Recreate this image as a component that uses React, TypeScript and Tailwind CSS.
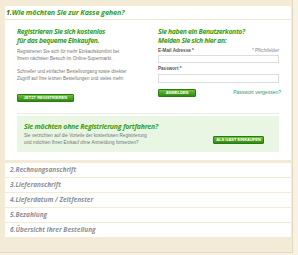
import React from "react";

const steps = [
  "2.Rechnungsanschrift",
  "3.Lieferanschrift",
  "4.Lieferdatum / Zeitfenster",
  "5.Bezahlung",
  "6.Übersicht Ihrer Bestellung",
];

function GreenButton({ label, className = "" }: { label: string; className?: string }) {
  return (
    <button
      className={`h-[8px] rounded-[1px] bg-gradient-to-b from-[#6cc43a] to-[#2f8a12] border border-[#2a7a10] text-white text-[4px] font-bold leading-none whitespace-nowrap font-['Liberation_Sans',Arial,sans-serif] flex items-center justify-center ${className}`}
    >
      {label}
    </button>
  );
}

export default function App() {
  return (
    <div className="w-[298px] h-[255px] bg-[#f8f2e5] overflow-hidden">
      <div className="w-[293px] h-[253px] bg-[#f4ebd7] border-r border-b border-[#e4d9c0] pt-[6px] pl-[5px]">
        <div className="w-[286px] flex flex-col font-['Open_Sans',sans-serif]">
          {/* step 1 header */}
          <div className="h-[13px] bg-white flex items-center pl-[1px] text-[7.3px] tracking-[-0.15px] font-bold italic leading-none">
            <span className="text-[#2f6b1c]">1.</span>
            <span className="text-[#3a9e14]">Wie möchten Sie zur Kasse gehen?</span>
          </div>
          <div className="h-[1px] bg-[#efe6d2]" />
          {/* step 1 body */}
          <div className="bg-white h-[140px] px-[12px] pt-[7px] flex flex-col">
            <div className="flex">
              {/* register */}
              <div className="w-[129px] flex flex-col">
                <h2 className="text-[6.8px] tracking-[-0.3px] leading-[9px] font-bold italic text-[#3a9e14] whitespace-nowrap">
                  Registrieren Sie sich kostenlos
                  <br />
                  für das bequeme Einkaufen.
                </h2>
                <div className="mt-[3px] text-[4.6px] leading-[7.4px] text-[#777] font-['Liberation_Sans',Arial,sans-serif]">
                  <p>
                    Registrieren Sie sich für mehr Einkaufskomfort bei
                    <br />
                    Ihrem nächsten Besuch im Online-Supermarkt.
                  </p>
                  <p className="mt-[5px]">
                    Schneller und einfacher Bestellvorgang sowie direkter
                    <br />
                    Zugriff auf Ihre letzten Bestellungen und vieles mehr.
                  </p>
                </div>
                <GreenButton label="JETZT REGISTRIEREN" className="w-[57px] mt-[11px]" />
              </div>
              {/* login */}
              <div className="ml-[12px] flex-1 flex flex-col">
                <h2 className="text-[6.8px] tracking-[-0.3px] leading-[9px] font-bold italic text-[#3a9e14] whitespace-nowrap">
                  Sie haben ein Benutzerkonto?
                  <br />
                  Melden Sie sich hier an:
                </h2>
                <div className="mt-[2px] flex justify-between items-center text-[4.6px] leading-[7px] font-['Liberation_Sans',Arial,sans-serif]">
                  <span className="font-bold text-[#555]">E-Mail Adresse *</span>
                  <span className="text-[#888]">* Pflichtfelder</span>
                </div>
                <div className="mt-[1px] h-[8px] border border-[#ddd] bg-white" />
                <span className="mt-[2px] font-bold text-[#555] text-[4.6px] leading-[7px] font-['Liberation_Sans',Arial,sans-serif]">
                  Passwort *
                </span>
                <div className="mt-[2px] h-[9px] border border-[#ddd] bg-white" />
                <div className="mt-[6px] flex justify-between items-center">
                  <GreenButton label="ANMELDEN" className="w-[38px]" />
                  <span className="text-[5px] text-[#2e9a6a] font-['Liberation_Sans',Arial,sans-serif] mr-[-2px]">
                    Passwort vergessen?
                  </span>
                </div>
              </div>
            </div>
            <div className="mt-[11px] h-[1px] bg-[#e8efe2]" />
            {/* guest */}
            <div className="mt-[2px] h-[36px] bg-[#e9f6e3] pl-[7px] pr-[15px] flex items-end justify-between pb-[6px]">
              <div className="flex flex-col">
                <h3 className="text-[6.9px] tracking-[-0.2px] leading-[9px] font-bold italic text-[#3a9e14] whitespace-nowrap">
                  Sie möchten ohne Registrierung fortfahren?
                </h3>
                <p className="mt-[1px] text-[4.6px] leading-[7px] text-[#777] font-['Liberation_Sans',Arial,sans-serif]">
                  Sie verzichten auf die Vorteile der kostenlosen Registrierung
                  <br />
                  und möchten Ihren Einkauf ohne Anmeldung fortsetzen?
                </p>
              </div>
              <GreenButton label="ALS GAST EINKAUFEN" className="w-[51px] mb-[2px]" />
            </div>
          </div>
          {/* remaining steps */}
          <div className="mt-[3px] flex flex-col gap-[1px]">
            {steps.map((s) => (
              <div
                key={s}
                className="h-[14px] bg-white flex items-center pl-[5px] text-[6.5px] font-bold italic text-[#8d9096] leading-none"
              >
                {s}
              </div>
            ))}
          </div>
        </div>
      </div>
    </div>
  );
}
